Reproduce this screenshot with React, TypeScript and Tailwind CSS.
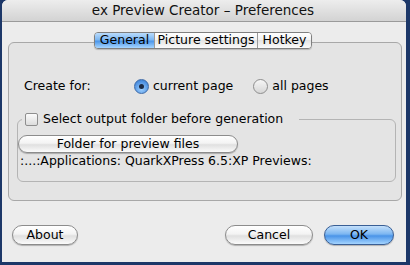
const font = { fontFamily: '"DejaVu Sans", "Liberation Sans", sans-serif' };

function AquaButton({ label, primary, className }: { label: string; primary?: boolean; className?: string }) {
  return (
    <button
      className={`flex items-center justify-center rounded-full border text-[12.5px] leading-none text-black shadow-[0_1px_1px_rgba(0,0,0,0.25)] ${
        primary
          ? 'border-[#3a5f95] bg-[linear-gradient(#c4e0fb_0%,#7cb6f1_45%,#4a94e8_55%,#a4d4ff_100%)]'
          : 'border-[#8c8c8c] bg-[linear-gradient(#ffffff_0%,#f3f3f3_45%,#e0e0e0_55%,#fbfbfb_100%)]'
      } ${className ?? ''}`}
    >
      {label}
    </button>
  );
}

function Radio({ checked, label }: { checked?: boolean; label: string }) {
  return (
    <label className="flex items-center gap-[4px]">
      {checked ? (
        <span className="flex h-[15px] w-[15px] items-center justify-center rounded-full border border-[#3d6aa8] bg-[radial-gradient(circle_at_50%_70%,#9ed0ff,#4b8fe0_70%,#2f6fc2)]">
          <span className="h-[5px] w-[5px] rounded-full bg-[#1d2b44]" />
        </span>
      ) : (
        <span className="h-[15px] w-[15px] rounded-full border border-[#8e8e8e] bg-[linear-gradient(#f6f6f6,#d6d6d6)]" />
      )}
      <span className="text-[12.5px] text-black">{label}</span>
    </label>
  );
}

export default function App() {
  return (
    <div className="h-[265px] w-[410px] overflow-hidden bg-[#1c3768]" style={font}>
      <div className="ml-[2px] flex h-[262px] w-[404px] flex-col rounded-t-[6px] bg-[#ececec]">
        {/* title bar */}
        <div className="flex h-[22px] items-center justify-center rounded-t-[6px] border-b border-[#9a9a9a] bg-[linear-gradient(#ededed,#d3d3d3)] pr-[2px] text-[13.5px] text-[#111]">
          ex Preview Creator – Preferences
        </div>

        <div className="flex flex-1 flex-col pt-[10px]">
          {/* tabs */}
          <div className="relative z-10 -mb-[7px] flex justify-center pr-[2px]">
            <div className="flex h-[17px] overflow-hidden rounded-[4px] border border-[#7f7f7f] text-[12.5px] leading-none shadow-[0_1px_1px_rgba(0,0,0,0.2)]">
              <span className="flex w-[59px] items-center justify-center bg-[linear-gradient(#b9dbfb_0%,#7db7f2_45%,#4d97ea_55%,#a8d6ff_100%)] text-black">
                General
              </span>
              <span className="flex w-[103px] items-center justify-center border-l border-[#9a9a9a] bg-[linear-gradient(#ffffff,#f1f1f1_50%,#e4e4e4_50%,#fafafa)]">
                Picture settings
              </span>
              <span className="flex w-[54px] items-center justify-center border-l border-[#9a9a9a] bg-[linear-gradient(#ffffff,#f1f1f1_50%,#e4e4e4_50%,#fafafa)]">
                Hotkey
              </span>
            </div>
          </div>

          {/* tab box */}
          <div className="ml-[6px] h-[159px] w-[394px] rounded-[6px] border border-[#a8a8a8] bg-[#e4e4e4] px-[8px] pt-[35px]">
            <div className="flex h-[16px] items-center pl-[7px]">
              <span className="w-[110px] text-[12.5px] text-black">Create for:</span>
              <Radio checked label="current page" />
              <span className="w-[20px]" />
              <Radio label="all pages" />
            </div>

            <div className="mt-[25px] h-[63px] w-[379px] rounded-[6px] border border-[#b4b4b4]">
              <div className="-mt-[8px] flex">
                <div className="ml-[4px] flex items-center gap-[5px] bg-[#e4e4e4] px-[3px] pr-[16px]">
                  <span className="h-[13px] w-[13px] rounded-[2px] border border-[#8e8e8e] bg-[linear-gradient(#fbfbfb,#dcdcdc)]" />
                  <span className="text-[12.5px] leading-[14px] text-black">Select output folder before generation</span>
                </div>
              </div>
              <AquaButton label="Folder for preview files" className="mt-[9px] h-[18px] w-[220px]" />
              <div className="mt-[0px] pl-[2px] text-[12.5px] leading-[15px] text-black">
                :...:Applications: QuarkXPress 6.5:XP Previews:
              </div>
            </div>
          </div>

          {/* bottom buttons */}
          <div className="mt-[24px] flex h-[20px] items-center pl-[10px] pr-[12px]">
            <AquaButton label="About" className="h-[20px] w-[66px]" />
            <span className="flex-1" />
            <AquaButton label="Cancel" className="h-[20px] w-[88px]" />
            <AquaButton label="OK" primary className="ml-[11px] h-[20px] w-[70px]" />
          </div>
        </div>
      </div>
    </div>
  );
}
